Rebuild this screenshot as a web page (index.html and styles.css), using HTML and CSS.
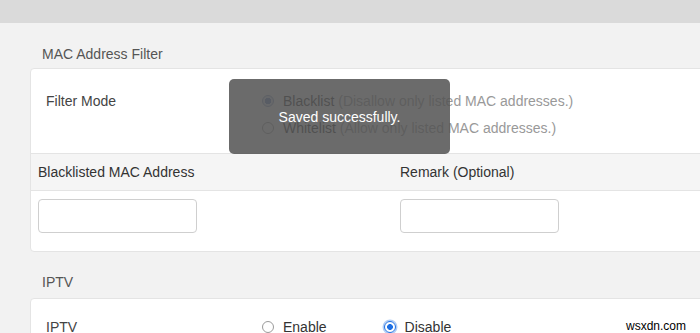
FILE: index.html
```html
<!DOCTYPE html>
<html>
<head>
<meta charset="utf-8">
<link rel="stylesheet" href="styles.css">
</head>
<body>
<div class="topbar"></div>
<div class="page">
  <div class="section-title">MAC Address Filter</div>
  <div class="card">
    <div class="row">
      <div class="label">Filter Mode</div>
      <div class="options-col">
        <div class="option"><span class="radio checked-muted"></span><span class="opt-text">Blacklist <span class="hint">(Disallow only listed MAC addresses.)</span></span></div>
        <div class="option"><span class="radio"></span><span class="opt-text">Whitelist <span class="hint">(Allow only listed MAC addresses.)</span></span></div>
      </div>
    </div>
    <div class="table-head">
      <div class="cell">Blacklisted MAC Address</div>
      <div class="cell">Remark (Optional)</div>
    </div>
    <div class="table-body">
      <div class="cell"><input class="text-input" type="text"></div>
      <div class="cell"><input class="text-input" type="text"></div>
    </div>
  </div>

  <div class="section-title second">IPTV</div>
  <div class="card">
    <div class="row iptv-row">
      <div class="label">IPTV</div>
      <div class="options-inline">
        <div class="option inline"><span class="radio"></span><span class="opt-text">Enable</span></div>
        <div class="option inline"><span class="radio checked"></span><span class="opt-text">Disable</span></div>
      </div>
    </div>
  </div>
</div>

<div class="toast">Saved successfully.</div>
<div class="watermark">wsxdn.com</div>
</body>
</html>
```

FILE: styles.css
```css
html, body {
  margin: 0;
  padding: 0;
}
body {
  width: 700px;
  height: 333px;
  overflow: hidden;
  background: #f2f2f2;
  font-family: "Liberation Sans", Arial, sans-serif;
  font-size: 14px;
  color: #333;
  position: relative;
}
.topbar {
  height: 23px;
  background: #dadada;
}
.page {
  padding-left: 30px;
}
.section-title {
  padding: 23px 0 6px 12px;
  line-height: 16px;
  color: #555;
}
.section-title.second {
  padding-top: 22px;
  padding-bottom: 8px;
}
.card {
  width: 724px;
  background: #fff;
  border: 1px solid #e4e4e4;
  border-radius: 4px;
}
.row {
  display: flex;
  padding: 24px 0 17px 15px;
  line-height: 16px;
}
.label {
  width: 216px;
  color: #444;
}
.options-col {
  display: flex;
  flex-direction: column;
  gap: 11px;
}
.option {
  display: flex;
  align-items: center;
  white-space: nowrap;
}
.option.inline {
  margin-right: 57px;
}
.options-inline {
  display: flex;
}
.radio {
  width: 10px;
  height: 10px;
  border: 1px solid #9a9a9a;
  border-radius: 50%;
  background: #fff;
  margin-right: 9px;
  flex: none;
}
.radio.checked-muted {
  border-color: #8fa3c8;
  background: radial-gradient(circle, #6f8fc9 0 3px, #dfe6f3 3.5px);
}
.radio.checked {
  border: 1px solid #1d6fe3;
  background: radial-gradient(circle, #1d6fe3 0 2.6px, #fff 3.2px);
  box-shadow: 0 0 0 1.5px rgba(29, 111, 227, 0.35);
}
.opt-text {
  color: #333;
}
.hint {
  color: #999;
}
.table-head {
  display: grid;
  grid-template-columns: 362px 362px;
  background: #f5f5f5;
  border-top: 1px solid #e4e4e4;
  border-bottom: 1px solid #e4e4e4;
}
.table-head .cell {
  padding: 10px 7px 10px;
  line-height: 16px;
  color: #333;
}
.table-body {
  display: grid;
  grid-template-columns: 362px 362px;
}
.table-body .cell {
  padding: 8px 7px 18px;
}
.text-input {
  display: block;
  box-sizing: border-box;
  width: 159px;
  height: 34px;
  border: 1px solid #cfcfcf;
  border-radius: 4px;
  background: #fff;
  margin: 0;
  padding: 0 8px;
  outline: none;
}
.iptv-row {
  padding-top: 20px;
}
.toast {
  position: absolute;
  left: 229px;
  top: 79px;
  width: 221px;
  height: 75px;
  border-radius: 5px;
  background: rgba(85, 85, 85, 0.87);
  color: #fff;
  display: flex;
  align-items: center;
  justify-content: center;
  line-height: 16px;
}
.watermark {
  position: absolute;
  right: 14px;
  top: 319px;
  font-size: 12px;
  line-height: 15px;
  color: #000;
  -webkit-font-smoothing: none;
}
```
